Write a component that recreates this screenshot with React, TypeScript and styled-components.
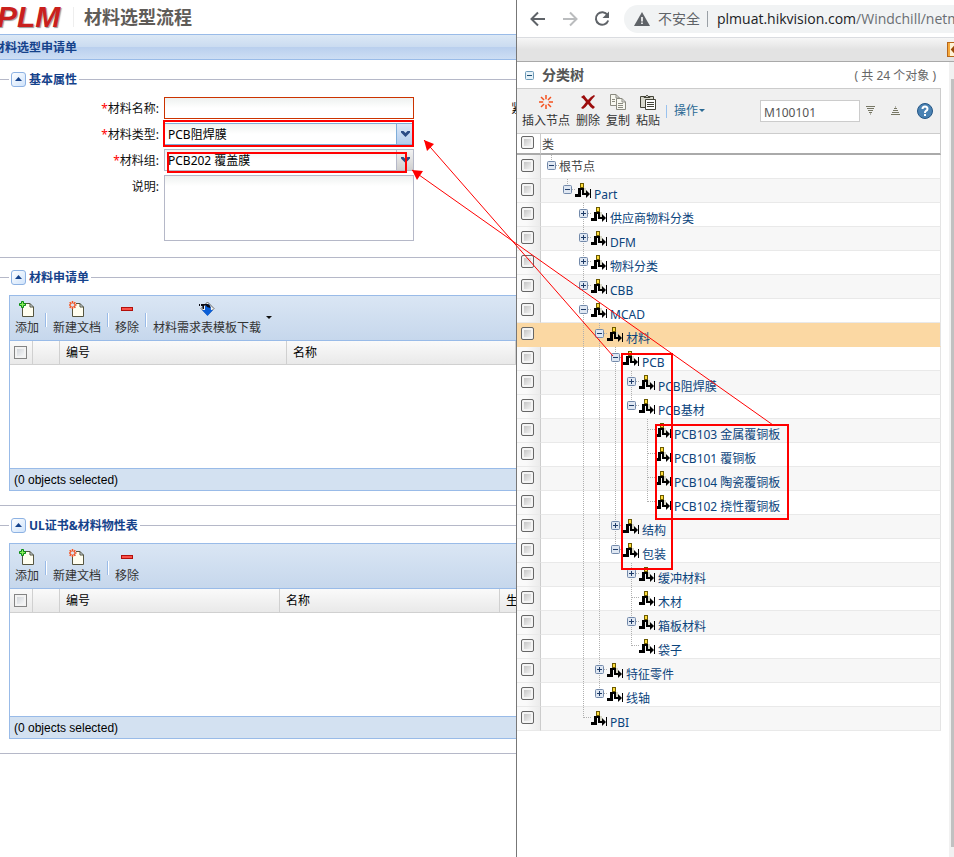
import React, { useState } from "react";
import styled, { createGlobalStyle, css } from "styled-components";

const GlobalStyle = createGlobalStyle`
  *, *::before, *::after { box-sizing: border-box; }
  html, body { margin: 0; padding: 0; background: #fff; }
  body, button, input, select, textarea {
    font-family: "Noto Sans", "Noto Sans CJK SC", sans-serif;
    font-size: 12px;
    line-height: 16px;
  }
  h1, h2, h3 { margin: 0; font-weight: 700; }
  button { margin: 0; padding: 0; border: 0; background: none; cursor: pointer; }
`;

const Page = styled.div`
  position: relative;
  display: grid;
  grid-template-columns: minmax(0, 516fr) minmax(0, 438fr);
  min-height: 100vh;
  overflow: hidden;
`;

/* ---------- Request form ---------- */

const FormPane = styled.main`
  min-width: 0;
  overflow: hidden;
`;

const Brand = styled.header`
  display: flex;
  align-items: center;
  height: 34px;
`;

const Logo = styled.span`
  margin-left: -3px;
  width: 76px;
  font: italic 700 30px/34px "Liberation Sans", sans-serif;
  color: #c9201d;
  text-shadow: 1px 1px 1px #999;
`;

const BrandTitle = styled.h1`
  padding-left: 10px;
  border-left: 1px solid #eee;
  font-size: 18px;
  line-height: 20px;
  color: #5f5c58;
  white-space: nowrap;
`;

const TitleBar = styled.h2`
  height: 26px;
  border: solid #99bbe8;
  border-width: 1px 0;
  background: linear-gradient(#dce8f5, #cbdcf1 48%, #b9cfee 50%, #cddef4);
  font-size: 12px;
  line-height: 26px;
  color: #15428b;
  text-indent: -7px;
  white-space: nowrap;
`;

const Section = styled.section`
  padding: 11px 0 14px;
  border-bottom: 1px solid #b5b8c8;
`;

const SectionHead = styled.div`
  display: flex;
  align-items: center;
  height: 16px;
  margin-bottom: 10px;
  gap: 2px;
  white-space: nowrap;
  &::before, &::after { content: ""; height: 1px; background: #b5b8c8; }
  &::before { width: 9px; }
  &::after { flex: 1; }
`;

const Collapse = styled.button`
  display: grid;
  place-items: center;
  width: 15px;
  height: 15px;
  border: 1px solid #8db2e3;
  border-radius: 3px;
  background: linear-gradient(135deg, #fff, #cfe3fb);
`;

const SectionTitle = styled.h3`
  padding: 2px 0 0 1px;
  font-size: 12px;
  line-height: 16px;
  color: #15428b;
`;

const Form = styled.form`
  display: grid;
  gap: 4px;
  padding-bottom: 2px;
`;

const Field = styled.div`
  display: grid;
  grid-template-columns: 159px 250px 1fr;
  column-gap: 5px;
  align-items: start;
  white-space: nowrap;
`;

const Label = styled.label`
  height: 22px;
  line-height: 24px;
  text-align: right;
  color: #111;
`;

const SideLabel = styled(Label)`
  padding-left: 92px;
  text-align: left;
`;

const Star = styled.span`
  color: #f00;
`;

const control = css`
  width: 100%;
  margin: 0;
  padding: 0 4px;
  border: 1px solid #b5b8c8;
  border-radius: 0;
  background: linear-gradient(#eef1f0, #fff 10px);
  color: #000;
  outline: 0;
`;

const TextInput = styled.input`
  ${control}
  height: 22px;
  border-color: #c30;
`;

const TextArea = styled.textarea`
  ${control}
  display: block;
  height: 66px;
  resize: none;
`;

const SelectBox = styled.div<{ $active?: boolean }>`
  display: grid;
  grid-template-columns: 1fr 18px;
  height: 22px;
  select {
    ${control}
    grid-area: 1 / 1 / 2 / 3;
    height: 22px;
    padding: 2px 3px 0;
    line-height: 18px;
    appearance: none;
    border-color: ${(p) => (p.$active ? "#7eadd9" : "#b5b8c8")};
  }
`;

const Trigger = styled.span<{ $active?: boolean }>`
  grid-area: 1 / 2 / 2 / 3;
  display: grid;
  place-items: center;
  border: 1px solid ${(p) => (p.$active ? "#7eadd9" : "#b5b8c8")};
  background: ${(p) => (p.$active ? "linear-gradient(#dbe8f8, #b4cdec)" : "linear-gradient(#f2f2f2, #cfcfcf)")};
  pointer-events: none;
`;

const GridPanel = styled.div`
  margin-left: 9px;
  border: 1px solid #99bbe8;
  border-right: 0;
`;

const GridTools = styled.div`
  display: flex;
  align-items: center;
  height: 45px;
  padding: 0 5px;
  border-bottom: 1px solid #99bbe8;
  background: linear-gradient(#dae6f4, #c6d7ec);
`;

const ToolButton = styled.button`
  display: flex;
  flex-direction: column;
  align-items: center;
  gap: 3px;
  flex: none;
  color: #333;
  white-space: nowrap;
  svg { display: block; }
`;

const MenuCaret = styled.button`
  flex: none;
  padding: 0 0 0 5px;
  svg { display: block; }
`;

const ToolLine = styled.span`
  flex: none;
  width: 2px;
  height: 14px;
  margin: 3px 6px 0;
  border-left: 1px solid #99bbe8;
  background: #fff;
`;

const GridTable = styled.table`
  display: block;
  height: 127px;
  overflow: hidden;
  border-spacing: 0;
  thead { display: block; background: linear-gradient(#fafafa, #e9e9e9); border-bottom: 1px solid #d0d0d0; }
  tr { display: flex; height: 23px; }
`;

const ColHead = styled.th<{ $w?: number }>`
  flex: ${(p) => (p.$w ? `0 0 ${p.$w}px` : "1 0 0")};
  overflow: hidden;
  padding: 0 6px;
  border-right: 1px solid #d0d0d0;
  font-weight: 400;
  line-height: 24px;
  text-align: left;
  white-space: nowrap;
  color: #000;
`;

const CheckHead = styled(ColHead)`
  padding: 5px 4px;
`;

const GridCheck = styled.input`
  appearance: none;
  display: block;
  width: 13px;
  height: 13px;
  margin: 0;
  border: 1px solid #848484;
  background: linear-gradient(135deg, #c8ccd2, #fff);
  box-shadow: inset 0 0 0 2px #f3f3f3;
`;

const GridFoot = styled.div`
  height: 22px;
  padding-left: 4px;
  border-top: 1px solid #99bbe8;
  background: #d3e1f1;
  font: 12px/22px "Liberation Sans", sans-serif;
  color: #000;
`;

/* ---------- Browser with the class tree ---------- */

const Browser = styled.aside`
  display: flex;
  flex-direction: column;
  min-width: 0;
  overflow: hidden;
  border-left: 1px solid #777;
  background: #fff;
`;

const AddressRow = styled.nav`
  display: flex;
  align-items: center;
  gap: 14px;
  height: 38px;
  padding-left: 12px;
  border-bottom: 1px solid #dadce0;
  button { flex: none; height: 18px; }
  svg { display: block; }
`;

const Address = styled.div`
  flex: 1;
  display: flex;
  align-items: center;
  height: 28px;
  min-width: 0;
  overflow: hidden;
  margin-left: -1px;
  padding-left: 10px;
  border-radius: 14px 0 0 14px;
  background: #f1f3f4;
  font-size: 14px;
  color: #5f6368;
  white-space: nowrap;
  svg { flex: none; }
`;

const Insecure = styled.span`
  margin: 0 7px 0 8px;
`;

const Url = styled.a`
  padding-left: 9px;
  border-left: 1px solid #9aa0a6;
  font-family: "Open Sans", sans-serif;
  color: #6a6e73;
  text-decoration: none;
  b { font-weight: 400; color: #202124; }
`;

const Banner = styled.div`
  display: flex;
  align-items: center;
  justify-content: flex-end;
  height: 24px;
  border-bottom: 1px solid #a9a9a9;
  background: linear-gradient(#f6f6f6, #e3e3e3 50%, #e3e3e3);
  svg { display: block; }
`;

const BrowserBody = styled.div`
  flex: 1;
  display: flex;
  gap: 8px;
`;

const ScrollTrack = styled.div`
  flex: none;
  width: 5px;
  padding: 17px 0 10px 2px;
  background: #f1f1f1;
`;

const ScrollThumb = styled.div`
  height: 100%;
  background: #c1c1c1;
`;

const TreePane = styled.div`
  flex: 1;
  min-width: 0;
`;

const TreeHead = styled.header`
  display: flex;
  align-items: center;
  height: 26px;
  padding: 0 5px 0 8px;
  color: #666;
  svg { margin-right: 8px; }
  h2 { flex: 1; font-size: 14px; line-height: 20px; color: #555; }
  span { padding-top: 2px; }
`;

const TreeTools = styled.div`
  display: flex;
  align-items: center;
  height: 46px;
  padding: 0 7px 0 5px;
  gap: 6px;
  border: solid #ccc;
  border-width: 1px 1px 1px 0;
  background: #f0f0f0;
`;

const TreeLine = styled.span`
  width: 1px;
  height: 13px;
  background: #99c2ee;
`;

const ActionMenu = styled.button`
  display: flex;
  align-items: center;
  gap: 1px;
  padding-left: 1px;
  white-space: nowrap;
  color: #2b6a94;
`;

const SearchInput = styled.input`
  width: 100px;
  min-width: 0;
  height: 22px;
  margin-left: auto;
  padding: 2px 3px 0;
  border: 1px solid #ccc;
  background: #fff;
  color: #555;
  outline: 0;
`;

const Steppers = styled.span`
  display: flex;
  gap: 16px;
  width: 45px;
`;

const HelpButton = styled.button`
  padding-top: 4px;
`;

const TreeTable = styled.table`
  width: 100%;
  table-layout: fixed;
  border-collapse: separate;
  border-spacing: 0;
  th, td { padding: 0; text-align: left; font-weight: 400; }
  th { height: 21px; border-bottom: 2px solid #aaa; color: #444; }
  th:first-child { width: 24px; border-right: 1px solid #ccc; }
  th:last-child { border-right: 1px solid #ccc; padding: 2px 0 0 1px; }
`;

const TreeRow = styled.tr<{ $selected?: boolean; $shade?: boolean }>`
  background: ${(p) => (p.$selected ? "#fbd8a3" : p.$shade ? "#f7f7f7" : "#fff")};
  td { height: 24px; border-bottom: 1px solid ${(p) => (p.$selected ? "#fbd8a3" : "#e9e9e9")}; }
  td:first-child {
    border-right: 1px solid ${(p) => (p.$selected ? "#fbd8a3" : "#ccc")};
    background: ${(p) => (p.$selected ? "none" : "linear-gradient(90deg, #fafafa 40%, #ebebeb)")};
  }
  td:last-child { border-right: 1px solid #e4e4e4; }
`;

const TreeCheck = styled.input`
  appearance: none;
  display: block;
  width: 13px;
  height: 13px;
  margin: 0 0 2px 4px;
  border: 1px solid #666;
  border-radius: 2px;
  background: linear-gradient(135deg, #b8b8b8, #fff);
  box-shadow: inset 0 0 0 2px #f4f4f4;
`;

const NodeLine = styled.div`
  display: flex;
  height: 23px;
  padding-left: 2px;
  white-space: nowrap;
  svg { flex: none; display: block; }
`;

const Toggle = styled.button`
  flex: none;
  width: 16px;
  height: 23px;
`;

const IconSlot = styled.span`
  flex: none;
  width: 16px;
`;

const NodeLink = styled.a`
  padding: 8px 0 0 3px;
  color: #0b447c;
  line-height: 16px;
  text-decoration: none;
`;

const RootName = styled.span`
  line-height: 24px;
  color: #444;
`;

const Annotations = styled.svg`
  position: absolute;
  left: 0;
  top: 0;
  pointer-events: none;
`;

/* ---------- Icons ---------- */

const Burst = ({ x = 8, y = 8, r = 6 }: { x?: number; y?: number; r?: number }) => (
  <g stroke="#f4511e" strokeWidth="1.5">
    {[0, 45, 90, 135, 180, 225, 270, 315].map((a) => (
      <line key={a} x1={x} y1={y - r * 0.4} x2={x} y2={y - r} transform={`rotate(${a} ${x} ${y})`} />
    ))}
  </g>
);

const Sheet = () => <path d="M3.500 2.500H11L14.500 6V15.500H3.500Z M11 2.500V6H14.500" fill="#fffef0" stroke="#555540" />;

const AddIcon = () => (
  <svg width="16" height="16" viewBox="0 0 16 16">
    <Sheet />
    <path d="M2.500 .5H4.500V2.500H6.500V4.500H4.500V6.500H2.500V4.500H.5V2.500H2.500Z" fill="#8bef5a" stroke="#0a8a12" />
  </svg>
);

const NewDocIcon = () => (
  <svg width="16" height="16" viewBox="0 0 16 16">
    <Sheet />
    <rect x="0" y="0" width="7" height="7" fill="#dbe6f3" />
    <Burst x={3.5} y={4} r={4} />
  </svg>
);

const RemoveIcon = () => (
  <svg width="16" height="16" viewBox="0 0 16 16">
    <rect x="2.500" y="6.500" width="11" height="3" fill="#f9514a" stroke="#b30f0a" />
  </svg>
);

const DownloadIcon = () => (
  <svg width="16" height="16" viewBox="0 0 16 16">
    <path d="M8.500 1 15 7.500 8.500 14 2 7.500Z" fill="#f2f2f2" stroke="#666" />
    <path d="M6 4.500 9 3Q12 4 12 9H14L8.500 15 3 9H6Z" fill="#0b5fd8" />
    <path d="M2 3H8Q11 3 11.500 7L8 6 7 4.500H5V8H3.500V5H2Z" fill="#0a0a14" />
    <rect x="0" y="3" width="1" height="2" fill="#0a0a14" />
  </svg>
);

const CaretIcon = ({ color = "#111" }: { color?: string }) => (
  <svg width="6" height="4" viewBox="0 0 6 4"><path d="M0 0H6L3 3Z" fill={color} /></svg>
);

const ChevronIcon = () => (
  <svg width="9" height="6" viewBox="0 0 9 6"><path d="M0 0H2.500L4.500 2 6.500 0H9V1.500L4.500 6 0 1.500Z" fill="#2b4c85" /></svg>
);

const InsertIcon = () => <svg width="16" height="16" viewBox="0 0 16 16"><Burst r={7} /></svg>;

const DeleteIcon = () => (
  <svg width="16" height="16" viewBox="0 0 16 16">
    <path d="M1 3 4 1Q6 4 8 6 10 3 14 1L15 2Q12 5 10 8 12 11 15 13L13 15Q10 13 8 10 6 13 3 15L1 14Q4 11 6 8 4 5 1 3Z" fill="#9c0d0d" />
  </svg>
);

const CopyIcon = () => (
  <svg width="16" height="16" viewBox="0 0 16 16" fill="#f7f7f0" stroke="#8a8a80">
    <path d="M.5 .5H6L9.500 4V11.500H.5Z M6 .5V4H9.500" />
    <path d="M6.500 4.500H12L15.500 8V15.500H6.500Z M12 4.500V8H15.500" />
    <path d="M2 5.500H5M2 7.500H5M8 9.500H13M8 11.500H13M8 13.500H13" />
  </svg>
);

const PasteIcon = () => (
  <svg width="16" height="16" viewBox="0 0 16 16" stroke="#444438">
    <path d="M.5 2.500H13.500V13.500H.5Z" fill="#d9d9ce" />
    <path d="M4 3.500V2.500H6Q7 -.5 8 2.500H10V3.500Z" fill="#fff" />
    <path d="M5.500 5.500H15.500V15.500H5.500Z" fill="#fff" />
    <path d="M7 8.500H14M7 10.500H14M7 12.500H14" />
  </svg>
);

const StepIcon = ({ up }: { up?: boolean }) => (
  <svg width="9" height="9" viewBox="0 0 9 9">
    <path
      d="M0 .5H9M1 2.500H8M2 4.500H7M3 6.500H6M4 8H5"
      stroke="#777765"
      transform={up ? "rotate(180 4.500 4.500)" : undefined}
    />
  </svg>
);

const HelpIcon = () => (
  <svg width="16" height="16" viewBox="0 0 16 16">
    <circle cx="8" cy="8" r="7.500" fill="#4a82b3" stroke="#245685" />
    <path d="M5.500 6Q5.500 3.500 8 3.500T10.500 6Q10.500 7.200 8.800 8 8 8.500 8 10" fill="none" stroke="#fff" strokeWidth="2" />
    <rect x="7" y="11" width="2" height="2" fill="#fff" />
  </svg>
);

const ClassIcon = () => (
  <svg width="16" height="23" viewBox="0 0 16 23">
    <path d="M6 9H11V14H8V11H6Z" fill="#d8d8c8" />
    <path d="M3 9H9V14H11V11L15 15 11 19V16H7V11H6V18H0V15H3Z" fill="#000" />
    <rect x="15" y="10" width="1" height="9" fill="#000" />
    <rect x="5.500" y="4.500" width="3" height="4" fill="#ffdd3c" stroke="#6b5a00" />
  </svg>
);

const BoxSign = ({ open }: { open?: boolean }) => (
  <g>
    <rect x="4.500" y="6.500" width="8" height="8" rx="1" fill="#dfe7f2" stroke="#7289aa" />
    <path d={open ? "M6 10.500H11" : "M6 10.500H11M8.500 8V13"} stroke="#1f3c68" />
  </g>
);

type GuideKind = "blank" | "line" | "elbow" | "tee" | "plus" | "minus";

const Guide = ({ kind, last }: { kind: GuideKind; last?: boolean }) => (
  <svg width="16" height="23" viewBox="0 0 16 23">
    {kind !== "blank" && (
      <g stroke="#b0b0b0" strokeDasharray="1 1">
        <path d={`M8.500 0V${kind === "elbow" || last ? 11 : 23}`} />
        {kind !== "line" && <path d="M9 10.500H16" />}
      </g>
    )}
    {(kind === "plus" || kind === "minus") && <BoxSign open={kind === "minus"} />}
  </svg>
);

/* ---------- Data ---------- */

type TreeNode = { name: string; level: number; state?: "plus" | "minus" };

const NODES: TreeNode[] = [
  { name: "根节点", level: 0, state: "minus" },
  { name: "Part", level: 1, state: "minus" },
  { name: "供应商物料分类", level: 2, state: "plus" },
  { name: "DFM", level: 2, state: "plus" },
  { name: "物料分类", level: 2, state: "plus" },
  { name: "CBB", level: 2, state: "plus" },
  { name: "MCAD", level: 2, state: "minus" },
  { name: "材料", level: 3, state: "minus" },
  { name: "PCB", level: 4, state: "minus" },
  { name: "PCB阻焊膜", level: 5, state: "plus" },
  { name: "PCB基材", level: 5, state: "minus" },
  { name: "PCB103 金属覆铜板", level: 6 },
  { name: "PCB101 覆铜板", level: 6 },
  { name: "PCB104 陶瓷覆铜板", level: 6 },
  { name: "PCB102 挠性覆铜板", level: 6 },
  { name: "结构", level: 4, state: "plus" },
  { name: "包装", level: 4, state: "minus" },
  { name: "缓冲材料", level: 5, state: "plus" },
  { name: "木材", level: 5 },
  { name: "箱板材料", level: 5, state: "plus" },
  { name: "袋子", level: 5 },
  { name: "特征零件", level: 3, state: "plus" },
  { name: "线轴", level: 3, state: "plus" },
  { name: "PBI", level: 2 },
];

const continues = (index: number, level: number) => {
  const next = NODES.slice(index + 1).find((n) => n.level <= level);
  return !!next && next.level === level;
};

/* ---------- Parts ---------- */

function FormSection({ title, children }: { title: string; children: React.ReactNode }) {
  const [open, setOpen] = useState(true);
  return (
    <Section>
      <SectionHead>
        <Collapse type="button" aria-label={title} aria-expanded={open} onClick={() => setOpen(!open)}>
          <svg width="7" height="4" viewBox="0 0 7 4"><path d="M0 4 3.500 0 7 4Z" fill="#15428b" /></svg>
        </Collapse>
        <SectionTitle>{title}</SectionTitle>
      </SectionHead>
      {open && children}
    </Section>
  );
}

function ObjectGrid({ name, download, columns }: { name: string; download?: boolean; columns: { title: string; width?: number }[] }) {
  return (
    <GridPanel>
      <GridTools>
        <ToolButton type="button"><AddIcon />添加</ToolButton>
        <ToolLine />
        <ToolButton type="button"><NewDocIcon />新建文档</ToolButton>
        <ToolLine />
        <ToolButton type="button"><RemoveIcon />移除</ToolButton>
        {download && (
          <>
            <ToolLine />
            <ToolButton type="button"><DownloadIcon />材料需求表模板下载</ToolButton>
            <MenuCaret type="button" aria-label="更多下载"><CaretIcon /></MenuCaret>
          </>
        )}
      </GridTools>
      <GridTable>
        <thead>
          <tr>
            <CheckHead $w={23}><GridCheck type="checkbox" aria-label={`全选 ${name}`} /></CheckHead>
            <ColHead $w={27} />
            {columns.map((c) => <ColHead key={c.title} $w={c.width} scope="col">{c.title}</ColHead>)}
          </tr>
        </thead>
      </GridTable>
      <GridFoot>(0 objects selected)</GridFoot>
    </GridPanel>
  );
}

function TreeItem({ node, index }: { node: TreeNode; index: number }) {
  const root = node.level === 0;
  return (
    <TreeRow $selected={node.name === "材料"} $shade={index % 2 === 1}>
      <td><TreeCheck type="checkbox" aria-label={node.name} /></td>
      <td>
        <NodeLine>
          {Array.from({ length: node.level }, (_, level) => (
            <Guide key={level} kind={level > 1 && continues(index, level) ? "line" : "blank"} />
          ))}
          {node.state ? (
            <Toggle type="button" aria-label={`${node.name} 展开/折叠`}>
              <Guide kind={node.state} last={root || !continues(index, node.level)} />
            </Toggle>
          ) : (
            <Guide kind={continues(index, node.level) ? "tee" : "elbow"} />
          )}
          {root ? <RootName>{node.name}</RootName> : (
            <><IconSlot><ClassIcon /></IconSlot><NodeLink href="#">{node.name}</NodeLink></>
          )}
        </NodeLine>
      </td>
    </TreeRow>
  );
}

export default function App() {
  return (
    <>
      <GlobalStyle />
      <Page>
        <FormPane>
          <Brand>
            <Logo>PLM</Logo>
            <BrandTitle>材料选型流程</BrandTitle>
          </Brand>
          <TitleBar>材料选型申请单</TitleBar>

          <FormSection title="基本属性">
            <Form>
              <Field>
                <Label htmlFor="name"><Star>*</Star>材料名称:</Label>
                <TextInput id="name" />
                <SideLabel as="span">紧</SideLabel>
              </Field>
              <Field>
                <Label htmlFor="type"><Star>*</Star>材料类型:</Label>
                <SelectBox $active>
                  <select id="type"><option>PCB阻焊膜</option></select>
                  <Trigger $active><ChevronIcon /></Trigger>
                </SelectBox>
              </Field>
              <Field>
                <Label htmlFor="group"><Star>*</Star>材料组:</Label>
                <SelectBox>
                  <select id="group"><option>PCB202 覆盖膜</option></select>
                  <Trigger><ChevronIcon /></Trigger>
                </SelectBox>
              </Field>
              <Field>
                <Label htmlFor="note">说明:</Label>
                <TextArea id="note" />
              </Field>
            </Form>
          </FormSection>

          <FormSection title="材料申请单">
            <ObjectGrid name="材料申请单" download columns={[{ title: "编号", width: 227 }, { title: "名称" }]} />
          </FormSection>

          <FormSection title="UL证书&材料物性表">
            <ObjectGrid
              name="UL证书&材料物性表"
              columns={[{ title: "编号", width: 220 }, { title: "名称", width: 220 }, { title: "生", width: 120 }]}
            />
          </FormSection>
        </FormPane>

        <Browser>
          <AddressRow>
            <button type="button" aria-label="后退">
              <svg width="18" height="18" viewBox="0 0 18 18" fill="none" stroke="#5f6368" strokeWidth="2"><path d="M16 9H3M9 2.500 2.500 9 9 15.500" /></svg>
            </button>
            <button type="button" aria-label="前进">
              <svg width="18" height="18" viewBox="0 0 18 18" fill="none" stroke="#babcbe" strokeWidth="2"><path d="M2 9H15M9 2.500 15.500 9 9 15.500" /></svg>
            </button>
            <button type="button" aria-label="刷新">
              <svg width="18" height="18" viewBox="0 0 18 18"><path d="M14.500 5A6.300 6.300 0 1 0 15.200 10.500" fill="none" stroke="#5f6368" strokeWidth="2" /><path d="M16 1.500V8H9.500Z" fill="#5f6368" /></svg>
            </button>
            <Address>
              <svg width="16" height="14" viewBox="0 0 16 14"><path d="M8 0 16 14H0Z" fill="#5f6368" /><path d="M7.200 5H8.800V9.500H7.200ZM7.200 10.500H8.800V12H7.200Z" fill="#fff" /></svg>
              <Insecure>不安全</Insecure>
              <Url href="#"><b>plmuat.hikvision.com</b>/Windchill/netmarkets</Url>
            </Address>
          </AddressRow>
          <Banner>
            <svg width="7" height="15" viewBox="0 0 7 15">
              <rect x=".5" y=".5" width="12" height="14" fill="#fff3d6" stroke="#b8661a" />
              <path d="M1 1H3V14H1Z" fill="#f5a93b" />
              <path d="M8 4 5 7.500 8 11M5 7.500H8" fill="none" stroke="#9a4a08" strokeWidth="2" />
            </svg>
          </Banner>
          <BrowserBody>
            <TreePane>
              <TreeHead>
                <svg width="9" height="9" viewBox="0 0 9 9"><rect x=".5" y=".5" width="8" height="8" rx="1" fill="#e5f1f8" stroke="#6d9ab8" /><path d="M2 4.500H7" stroke="#1d4f73" /></svg>
                <h2>分类树</h2>
                <span>( 共 24 个对象 )</span>
              </TreeHead>
              <TreeTools>
                <ToolButton type="button"><InsertIcon />插入节点</ToolButton>
                <ToolButton type="button"><DeleteIcon />删除</ToolButton>
                <ToolButton type="button"><CopyIcon />复制</ToolButton>
                <ToolButton type="button"><PasteIcon />粘贴</ToolButton>
                <TreeLine />
                <ActionMenu type="button">操作<CaretIcon color="#2b6a94" /></ActionMenu>
                <SearchInput aria-label="搜索" defaultValue="M100101" />
                <Steppers>
                  <button type="button" aria-label="下一个"><StepIcon /></button>
                  <button type="button" aria-label="上一个"><StepIcon up /></button>
                </Steppers>
                <HelpButton type="button" aria-label="帮助"><HelpIcon /></HelpButton>
              </TreeTools>
              <TreeTable>
                <thead>
                  <tr><th><TreeCheck type="checkbox" aria-label="全选" /></th><th scope="col">类</th></tr>
                </thead>
                <tbody>
                  {NODES.map((node, i) => <TreeItem key={node.name} node={node} index={i} />)}
                </tbody>
              </TreeTable>
            </TreePane>
            <ScrollTrack><ScrollThumb /></ScrollTrack>
          </BrowserBody>
        </Browser>

        <Annotations width="954" height="857" viewBox="0 0 954 857">
          <g fill="none" stroke="#f00" strokeWidth="2">
            <rect x="164" y="121" width="249" height="25" />
            <rect x="168" y="153" width="238" height="19" />
            <rect x="622" y="354" width="50" height="215" />
            <rect x="656" y="425" width="132" height="94" />
          </g>
          <g stroke="#f00"><path d="M613 356 424 140M773 425 412 170" /></g>
          <path d="M424 140 434 144 427 151ZM412 170 423 171 417 180Z" fill="#f00" />
        </Annotations>
      </Page>
    </>
  );
}
